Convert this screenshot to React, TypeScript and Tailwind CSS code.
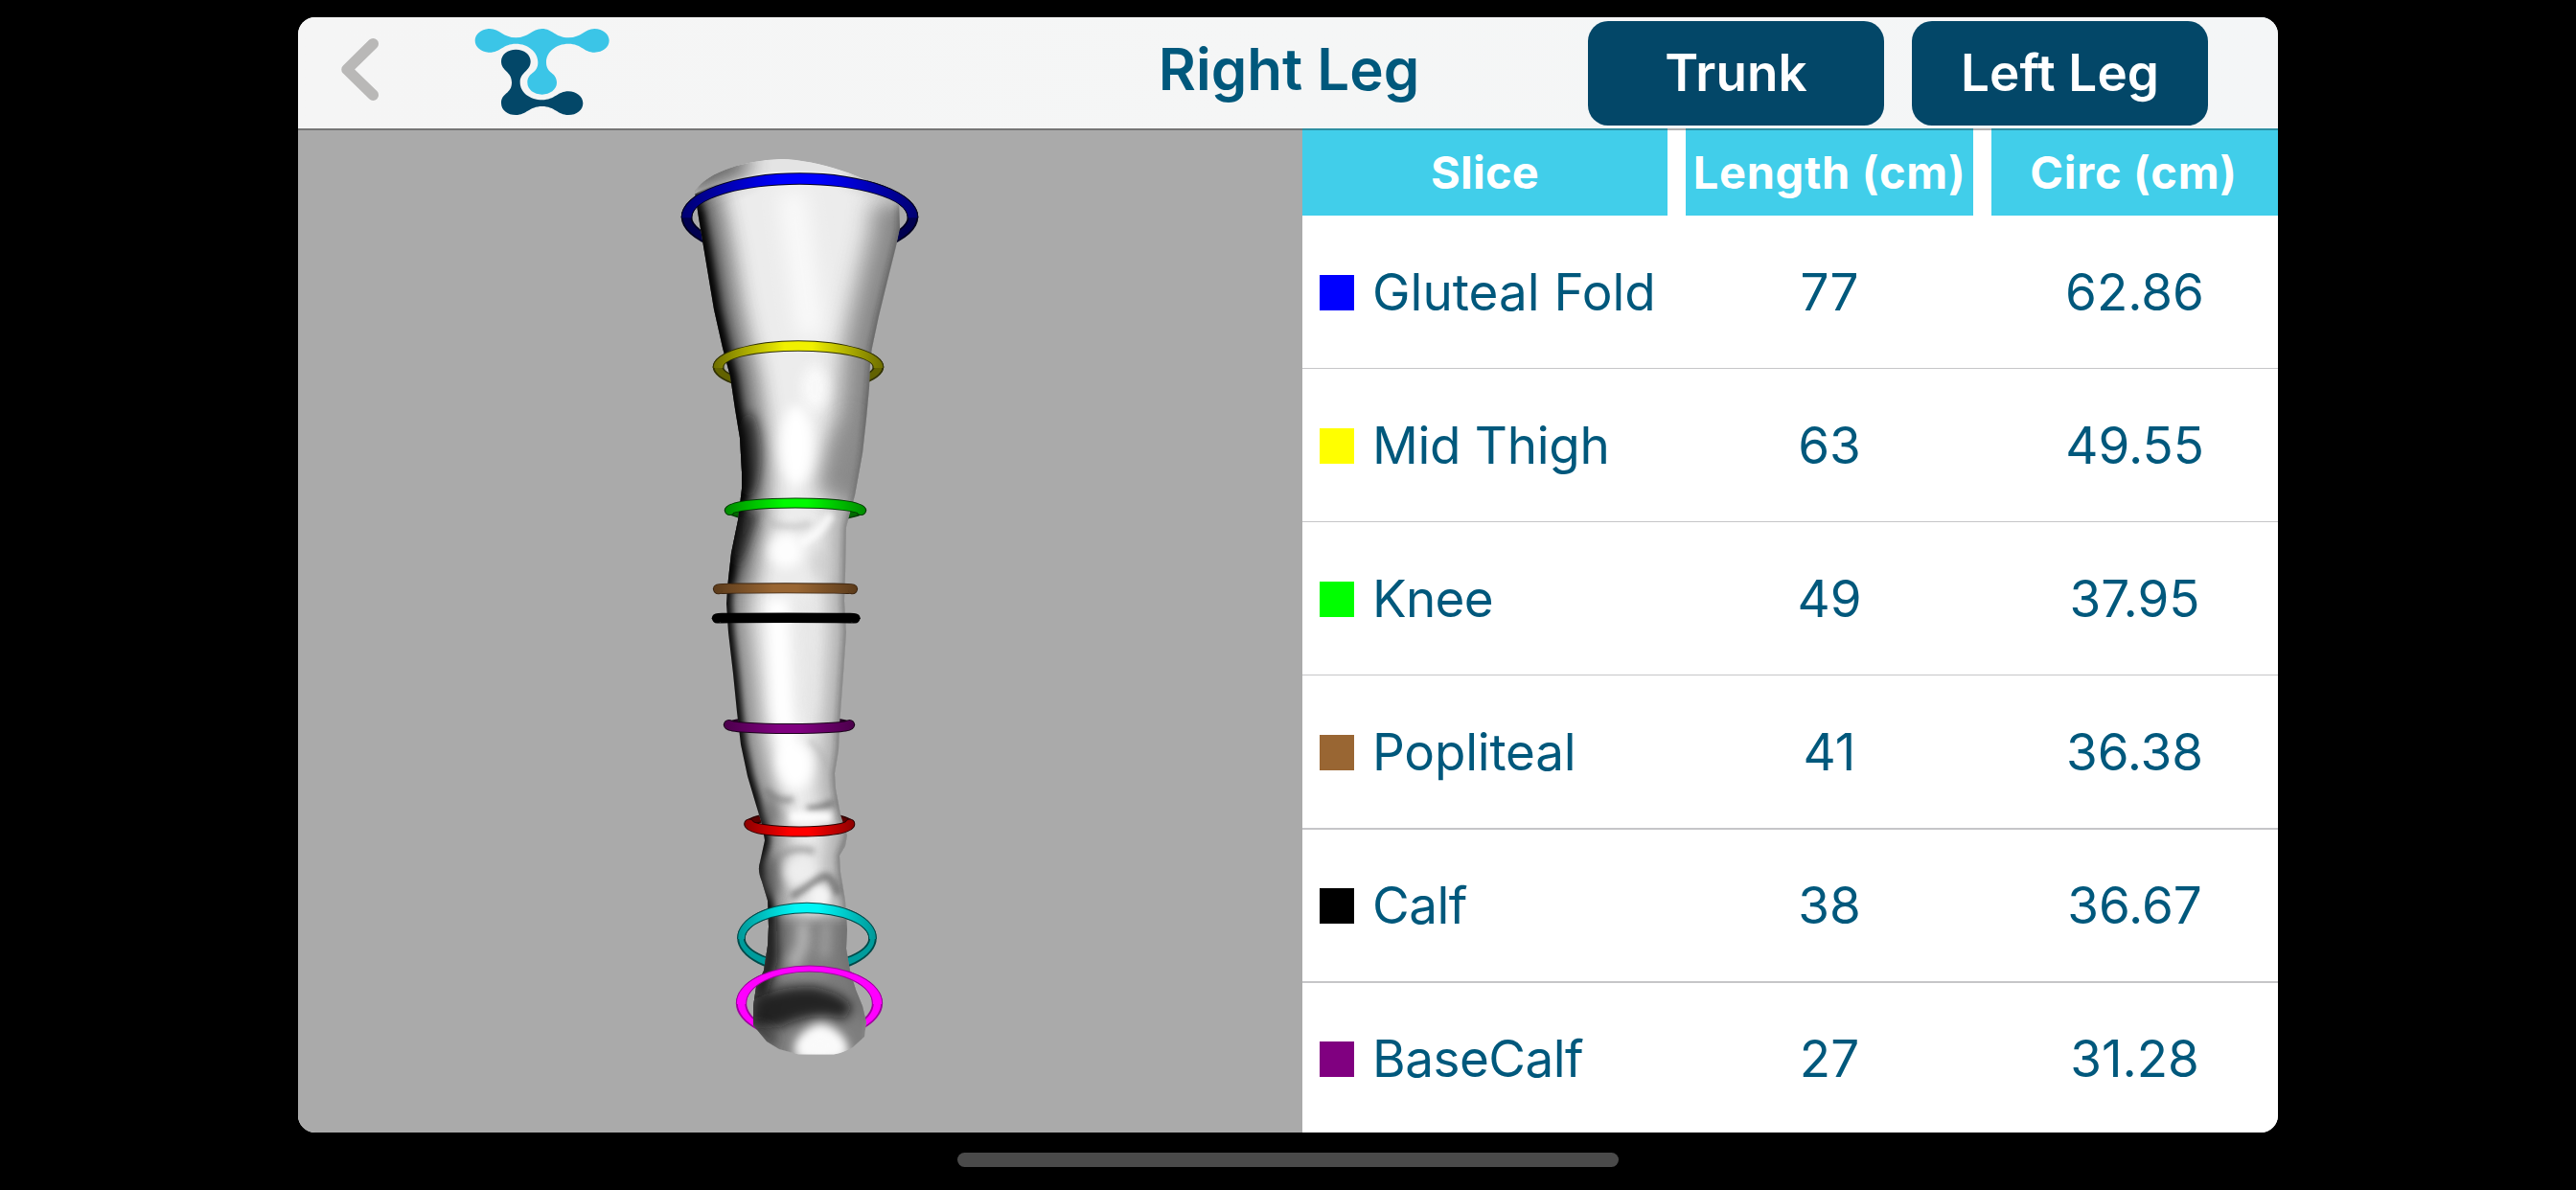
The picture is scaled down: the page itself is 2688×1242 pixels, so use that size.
import React from "react";

const FONT = "font-['Inter','Liberation_Sans',sans-serif]";

const rows = [
  { name: "Gluteal Fold", color: "bg-[#0000ff]", length: "77", circ: "62.86", box: "h-[160px] border-b pt-[2px]", tracking: "" },
  { name: "Mid Thigh", color: "bg-[#ffff00]", length: "63", circ: "49.55", box: "h-[160px] border-b pt-[2px]", tracking: "tracking-[-0.3px]" },
  { name: "Knee", color: "bg-[#00ff00]", length: "49", circ: "37.95", box: "h-[160px] border-b pt-[2px]", tracking: "tracking-[-0.7px]" },
  { name: "Popliteal", color: "bg-[#996633]", length: "41", circ: "36.38", box: "h-[161px] border-b-2 pt-[2px]", tracking: "tracking-[-0.2px]" },
  { name: "Calf", color: "bg-black", length: "38", circ: "36.67", box: "h-[160px] border-b-2 pt-px", tracking: "tracking-[-0.5px]" },
  { name: "BaseCalf", color: "bg-[#800080]", length: "27", circ: "31.28", box: "h-[160px] pb-px", tracking: "tracking-[-0.5px]" },
];

function Logo() {
  return (
    <svg className="h-[110px] w-[170px]" viewBox="0 0 510 330">
      <path
        fill="#3bc5e7"
        d="M93 30C125 30 135 58 175 58C215 58 225 30 257 30C289 30 299 58 340 58C380 58 390 30 421 30C447 30 467 47 467 67C467 88 447 104 421 104C388 104 380 77 340 77C300 77 270 103 270 135C270 172 303 165 303 199C303 221 281 236 257 236C232 236 211 221 211 199C211 165 244 172 244 135C244 103 213 77 175 77C135 77 126 104 93 104C67 104 47 88 47 67C47 47 67 30 93 30Z"
      />
      <path
        fill="#034768"
        d="M175 95C201 95 221 111 221 132C221 163 188 165 188 198C188 230 220 253 257 253C297 253 306 226 339 226C365 226 385 243 385 263C385 284 365 300 339 300C306 300 297 273 257 273C217 273 208 300 175 300C149 300 129 284 129 263C129 230 162 235 162 198C162 163 129 163 129 132C129 111 149 95 175 95Z"
      />
    </svg>
  );
}

type RingSpec = {
  id: string;
  cx: number;
  cy: number;
  rx: number;
  ry: number;
  tx: number;
  ty: number;
  mid: string;
  edge: string;
  back: string;
  shade: string;
  front: "top" | "bottom" | "all";
};

const rings: RingSpec[] = [
  { id: "gluteal", cx: 834.5, cy: 226.5, rx: 118, ry: 40, tx: 5.5, ty: 6, mid: "#0000ff", edge: "#000070", back: "#000020", shade: "#000050", front: "top" },
  { id: "thigh", cx: 833, cy: 383, rx: 83.5, ry: 22, tx: 5.5, ty: 5.5, mid: "#f0f000", edge: "#6c6c00", back: "#303000", shade: "#626200", front: "top" },
  { id: "knee", cx: 830, cy: 532.5, rx: 68.5, ry: 7.5, tx: 5.5, ty: 5.5, mid: "#00fa00", edge: "#008a00", back: "#003a00", shade: "#006a00", front: "top" },
  { id: "popliteal", cx: 819.5, cy: 614.8, rx: 70, ry: 1, tx: 5.5, ty: 5.5, mid: "#996633", edge: "#5a3a1a", back: "#3a2410", shade: "#3a2410", front: "all" },
  { id: "calf", cx: 820.2, cy: 645.3, rx: 72, ry: 0.5, tx: 5.5, ty: 5.3, mid: "#000000", edge: "#000000", back: "#000000", shade: "#000000", front: "all" },
  { id: "base", cx: 823.5, cy: 756.5, rx: 63, ry: 4, tx: 5.5, ty: 5.5, mid: "#800080", edge: "#4a004a", back: "#1a001a", shade: "#380038", front: "bottom" },
  { id: "ankle", cx: 834.3, cy: 860, rx: 52.5, ry: 8, tx: 5, ty: 5.5, mid: "#ff0000", edge: "#8a0000", back: "#2a0000", shade: "#5a0000", front: "bottom" },
  { id: "foot", cx: 842, cy: 979, rx: 68.5, ry: 31.5, tx: 4, ty: 5.5, mid: "#00f5f5", edge: "#009494", back: "#004a4a", shade: "#009c9c", front: "top" },
  { id: "toe", cx: 844.5, cy: 1047, rx: 71, ry: 36, tx: 5.3, ty: 3.2, mid: "#ff00ff", edge: "#ff00ff", back: "#a000a0", shade: "#ff00ff", front: "top" },
];

function ringPath(r: RingSpec, grow: number) {
  const oval = (rx: number, ry: number) =>
    `M${r.cx - rx} ${r.cy}a${rx} ${ry} 0 1 0 ${rx * 2} 0a${rx} ${ry} 0 1 0 ${-rx * 2} 0Z`;
  const outer = oval(r.rx + r.tx + grow, r.ry + r.ty + grow);
  const iy = r.ry - r.ty - grow;
  return iy > 0 ? outer + oval(r.rx - r.tx - grow, iy) : outer;
}

function BackRing({ r }: { r: RingSpec }) {
  return (
    <g>
      <path d={ringPath(r, 0.3)} fillRule="evenodd" fill={r.back} />
      <path d={ringPath(r, -1.6)} fillRule="evenodd" fill={r.shade} />
    </g>
  );
}

function FrontRing({ r }: { r: RingSpec }) {
  if (r.front === "all" || r.ry < 9) {
    const w = r.ty * 2;
    const s = r.front === "bottom" ? 1 : -1;
    const k = r.rx * 0.6;
    const y = r.cy + s * r.ry;
    const d = `M${r.cx - r.rx} ${r.cy}C${r.cx - r.rx} ${r.cy + s * r.ry * 0.5} ${r.cx - k} ${y} ${r.cx} ${y}S${r.cx + r.rx} ${r.cy + s * r.ry * 0.5} ${r.cx + r.rx} ${r.cy}`;
    return (
      <g fill="none" strokeLinecap="round">
        <path d={d} stroke={r.back} strokeWidth={w} />
        <path d={d} stroke={`url(#grad-${r.id})`} strokeWidth={w - 1.8} />
      </g>
    );
  }
  return (
    <g clipPath={`url(#half-${r.id})`}>
      <path d={ringPath(r, 0.3)} fillRule="evenodd" fill={r.back} />
      <path d={ringPath(r, -0.7)} fillRule="evenodd" fill={`url(#grad-${r.id})`} />
    </g>
  );
}

const LEG =
  "M725 200C735 182 770 168 815 166C855 167 905 184 930 204L938 212L939 238L935 257L926 293L917 330L910 363C907 380 908 390 907 405L904 437L900 473L892 517L883 550L882 600L881 627L883 660L880 703L876 757L875 783L871 807L872 823L877 850L884 872L882 883L876 893L877 910L882 940L884 970L883 990L887 1013L893 1033L900 1050L904 1067L902 1082L890 1093Q880 1099 870 1100.500L833 1100.500L813 1095L800 1087L786 1070L786 1050L789 1030L797 1013L801 987L802 967L801 940L795 920Q790 908 793 900L798 877L795 860L788 837L780 810L773 777L769 743L765 703L760 660L758 630L759 613L763 577L770 543L774 510L774 493L772 457L767 427L762 393L754 363L745 323L735 263L729 227Z";
const LEFT_EDGE =
  "M722 200L729 227L735 263L745 323L754 363L762 393L767 427L772 457L774 493L774 510L770 543L763 577L759 613L758 630L760 660L765 703L769 743L773 777L780 810L788 837L795 860L798 877L793 900L795 920L801 940L802 967L801 987L797 1013L789 1030L786 1050L786 1070";
const RIGHT_EDGE =
  "M939 212L939 238L935 257L926 293L917 330L910 363L907 405L904 437L900 473L892 517L883 550L882 600L881 627L883 660L880 703L876 757L875 783L871 807L872 823L877 850L884 872L876 893L877 910L882 940L884 970L883 990L887 1013L893 1033L900 1050L904 1067";
const UPPER_RIGHT_EDGE = "M939 212L939 238L926 293L910 363L907 405L900 473L890 520";
const UPPER_LEFT_EDGE = "M722 205L735 263L745 323L754 363L762 393L767 427L774 493L772 530L763 577L759 610";

function Blur({ id, amount }: { id: string; amount: number }) {
  return (
    <filter id={id} filterUnits="userSpaceOnUse" x="640" y="120" width="400" height="1040">
      <feGaussianBlur stdDeviation={amount} />
    </filter>
  );
}

function LegModel() {
  return (
    <svg className="h-full w-full" viewBox="311 134 1048 1048">
      <defs>
        <clipPath id="leg-clip">
          <path d={LEG} />
        </clipPath>
        <Blur id="b3" amount={3} />
        <Blur id="b6" amount={6} />
        <Blur id="b12" amount={11} />
        {rings.map((r) => (
          <React.Fragment key={r.id}>
            <linearGradient id={`grad-${r.id}`} gradientUnits="userSpaceOnUse" x1={r.cx - r.rx - 6} x2={r.cx + r.rx + 6} y1="0" y2="0">
              <stop offset="0" stopColor={r.edge} />
              <stop offset="0.42" stopColor={r.mid} />
              <stop offset="0.58" stopColor={r.mid} />
              <stop offset="1" stopColor={r.edge} />
            </linearGradient>
            <clipPath id={`half-${r.id}`}>
              <rect x={r.cx - 150} y={r.cy - 80} width="300" height="81" />
            </clipPath>
          </React.Fragment>
        ))}
      </defs>

      {rings.map((r) => (
        <BackRing key={r.id} r={r} />
      ))}

      <g clipPath="url(#leg-clip)">
        <path d={LEG} fill="#ececec" />
        <path d={LEFT_EDGE} fill="none" stroke="#5a5a5a" strokeWidth="44" filter="url(#b12)" opacity="0.7" />
        <path d={UPPER_LEFT_EDGE} fill="none" stroke="#555" strokeWidth="60" filter="url(#b12)" opacity="0.45" />
        <path d={RIGHT_EDGE} fill="none" stroke="#707070" strokeWidth="32" filter="url(#b12)" opacity="0.55" />
        <path d={UPPER_RIGHT_EDGE} fill="none" stroke="#606060" strokeWidth="66" filter="url(#b12)" opacity="0.5" />
        <path d={LEFT_EDGE} fill="none" stroke="#000" strokeWidth="12" filter="url(#b3)" opacity="0.9" />
        <path d={UPPER_LEFT_EDGE} fill="none" stroke="#000" strokeWidth="20" filter="url(#b6)" opacity="0.6" />
        <path d={RIGHT_EDGE} fill="none" stroke="#222" strokeWidth="3" filter="url(#b3)" opacity="0.7" />

        {/* thigh */}
        <path d="M826 200L846 350" stroke="#fbfbfb" strokeWidth="26" filter="url(#b12)" />

        {/* cut surface at the top of the thigh */}
        <path d="M720 206C740 192 780 178 834 178C880 178 920 190 942 214V150H720Z" fill="#e4e4e4" />
        <path d="M880 190L938 214L940 190L900 175Z" fill="#aaa" filter="url(#b6)" opacity="0.6" />
        <path d="M718 212C735 195 755 188 778 183L785 160H715Z" fill="#444" filter="url(#b12)" opacity="0.85" />

        {/* lower thigh and knee */}
        <ellipse cx="781" cy="475" rx="13" ry="44" fill="#111" filter="url(#b6)" opacity="0.6" />
        <path d="M868 455L890 430L896 515L852 518Z" fill="#888" filter="url(#b12)" opacity="0.8" />
        <ellipse cx="850" cy="405" rx="14" ry="24" fill="#fafafa" filter="url(#b6)" opacity="0.9" />
        <ellipse cx="831" cy="465" rx="17" ry="42" fill="#fff" filter="url(#b6)" />
        <path d="M792 535Q784 560 772 590L764 580L770 535Z" fill="#222" filter="url(#b6)" opacity="0.7" />
        <path d="M797 542Q820 556 846 546" fill="none" stroke="#b0b0b0" strokeWidth="8" filter="url(#b3)" opacity="0.45" />
        <path d="M835 568Q858 556 867 536" fill="none" stroke="#fff" strokeWidth="9" filter="url(#b3)" opacity="0.8" />
        <ellipse cx="820" cy="575" rx="18" ry="18" fill="#fff" filter="url(#b6)" opacity="0.9" />
        <ellipse cx="855" cy="588" rx="10" ry="16" fill="#c4c4c4" filter="url(#b6)" opacity="0.5" />

        {/* calf */}
        <path d="M811 625L816 740L826 800" fill="none" stroke="#fff" strokeWidth="22" filter="url(#b6)" />
        <path d="M842 625L846 740" stroke="#e4e4e4" strokeWidth="10" filter="url(#b6)" opacity="0.8" />
        <ellipse cx="830" cy="800" rx="18" ry="24" fill="#fff" filter="url(#b6)" />
        <path d="M845 772Q858 785 865 802" fill="none" stroke="#b0b0b0" strokeWidth="6" filter="url(#b3)" opacity="0.5" />
        <path d="M798 824Q812 839 828 834" fill="none" stroke="#777" strokeWidth="6" filter="url(#b3)" opacity="0.7" />
        <path d="M842 844Q858 844 870 837" fill="none" stroke="#555" strokeWidth="6" filter="url(#b3)" opacity="0.7" />
        <path d="M824 853H868" stroke="#fff" strokeWidth="12" filter="url(#b3)" opacity="0.9" />
        <ellipse cx="804" cy="848" rx="9" ry="15" fill="#666" filter="url(#b6)" opacity="0.6" />

        {/* ankle */}
        <path d="M808 897Q826 882 850 889" fill="none" stroke="#999" strokeWidth="8" filter="url(#b3)" opacity="0.75" />
        <ellipse cx="804" cy="915" rx="10" ry="24" fill="#555" filter="url(#b6)" opacity="0.7" />
        <ellipse cx="834" cy="910" rx="15" ry="14" fill="#eee" filter="url(#b6)" />
        <path d="M826 936Q845 924 858 915Q869 912 874 934" fill="none" stroke="#444" strokeWidth="7" filter="url(#b3)" opacity="0.6" />
        <ellipse cx="856" cy="936" rx="10" ry="11" fill="#f4f4f4" filter="url(#b3)" />

        {/* foot */}
        <path d="M780 958H910V1110H780Z" fill="#707070" filter="url(#b6)" opacity="0.88" />
        <path d="M802 950L804 1000L792 1040" fill="none" stroke="#080808" strokeWidth="16" filter="url(#b6)" opacity="0.85" />
        <path d="M838 962L838 985L826 1010" fill="none" stroke="#c4c4c4" strokeWidth="14" filter="url(#b6)" opacity="0.75" />
        <path d="M862 962L860 1000" fill="none" stroke="#a4a4a4" strokeWidth="12" filter="url(#b6)" opacity="0.8" />
        <ellipse cx="838" cy="1020" rx="28" ry="6" fill="#8c8c8c" filter="url(#b3)" opacity="0.5" />
        <path d="M785 1044Q815 1028 850 1030Q880 1036 890 1052L880 1064Q850 1054 815 1072L785 1074Z" fill="#0a0a0a" filter="url(#b6)" opacity="0.8" />
        <path d="M784 1068Q800 1068 812 1080L808 1096L786 1078Z" fill="#333" filter="url(#b6)" opacity="0.7" />
        <path d="M830 1104Q834 1074 856 1068Q878 1072 886 1104Z" fill="#fff" filter="url(#b6)" />
        <ellipse cx="856" cy="1092" rx="25" ry="15" fill="#fafafa" filter="url(#b6)" />
      </g>

      {rings.map((r) => (
        <FrontRing key={r.id} r={r} />
      ))}
    </svg>
  );
}

function HeaderCell({ children, className }: { children: React.ReactNode; className: string }) {
  return (
    <div className={`flex h-[91px] items-center justify-center whitespace-nowrap bg-[#41ceea] pb-px text-[47px] font-bold leading-none text-white ${className}`}>
      {children}
    </div>
  );
}

function NavButton({ children }: { children: React.ReactNode }) {
  return (
    <button className="flex h-[109px] w-[309px] items-center justify-center whitespace-nowrap rounded-[21px] bg-[#034768] text-[53px] font-semibold leading-none tracking-[0.1px] text-white">
      {children}
    </button>
  );
}

export default function App() {
  return (
    <div className={`flex h-[1242px] w-[2688px] flex-col items-center overflow-hidden bg-black pt-[18px] ${FONT}`}>
      <div className="flex h-[1164px] w-[2066px] flex-col overflow-hidden rounded-[18px] bg-white">
        <header className="flex h-[116px] shrink-0 items-start bg-gradient-to-r from-[#f5f5f5] via-[#f5f6f6] to-[#f4f6f7]">
          <svg className="ml-[34px] mt-[14px] h-[80px] w-[60px] shrink-0" viewBox="345 32 60 80">
            <path d="M389.300 45.700L362 72.500L389.300 99.200" fill="none" stroke="#b9b8b7" strokeWidth="11.500" strokeLinecap="round" strokeLinejoin="round" />
          </svg>
          <div className="ml-[75px] mt-[2px] w-[170px] shrink-0">
            <Logo />
          </div>
          <h1 className="ml-[410px] mt-[18px] flex w-[570px] justify-center whitespace-nowrap text-[60px] font-semibold leading-[73px] text-[#00587c]">
            Right Leg
          </h1>
          <div className="ml-[27px] mt-[4px] flex gap-[29px]">
            <NavButton>Trunk</NavButton>
            <NavButton>Left Leg</NavButton>
          </div>
        </header>
        <main className="relative flex min-h-0 flex-1">
          <section className="w-[1048px] shrink-0 bg-[#aaaaaa]">
            <LegModel />
          </section>
          <section className="flex flex-1 flex-col bg-white">
            <div className="flex gap-[19px]">
              <HeaderCell className="w-[381px] tracking-[0.2px]">Slice</HeaderCell>
              <HeaderCell className="w-[300px] tracking-[0.7px]">Length (cm)</HeaderCell>
              <HeaderCell className="w-[299px] pr-[2px] tracking-[0.7px]">Circ (cm)</HeaderCell>
            </div>
            {rows.map((row) => (
              <div
                key={row.name}
                className={`flex shrink-0 items-center gap-[19px] border-[#c6c6c8] text-[53px] leading-none text-[#00587c] ${row.box}`}
              >
                <div className="flex w-[381px] items-center whitespace-nowrap pl-[18px]">
                  <span className={`mr-[19px] h-[37px] w-[36px] shrink-0 ${row.color}`} />
                  <span className={row.tracking}>{row.name}</span>
                </div>
                <div className="w-[300px] text-center">{row.length}</div>
                <div className="w-[299px] text-center">{row.circ}</div>
              </div>
            ))}
          </section>
          <div className="absolute inset-x-0 top-0 h-[2px] bg-black/30" />
        </main>
      </div>
      <div className="mt-[21px] h-[15px] w-[690px] rounded-full bg-[#4a4a4a]" />
    </div>
  );
}
